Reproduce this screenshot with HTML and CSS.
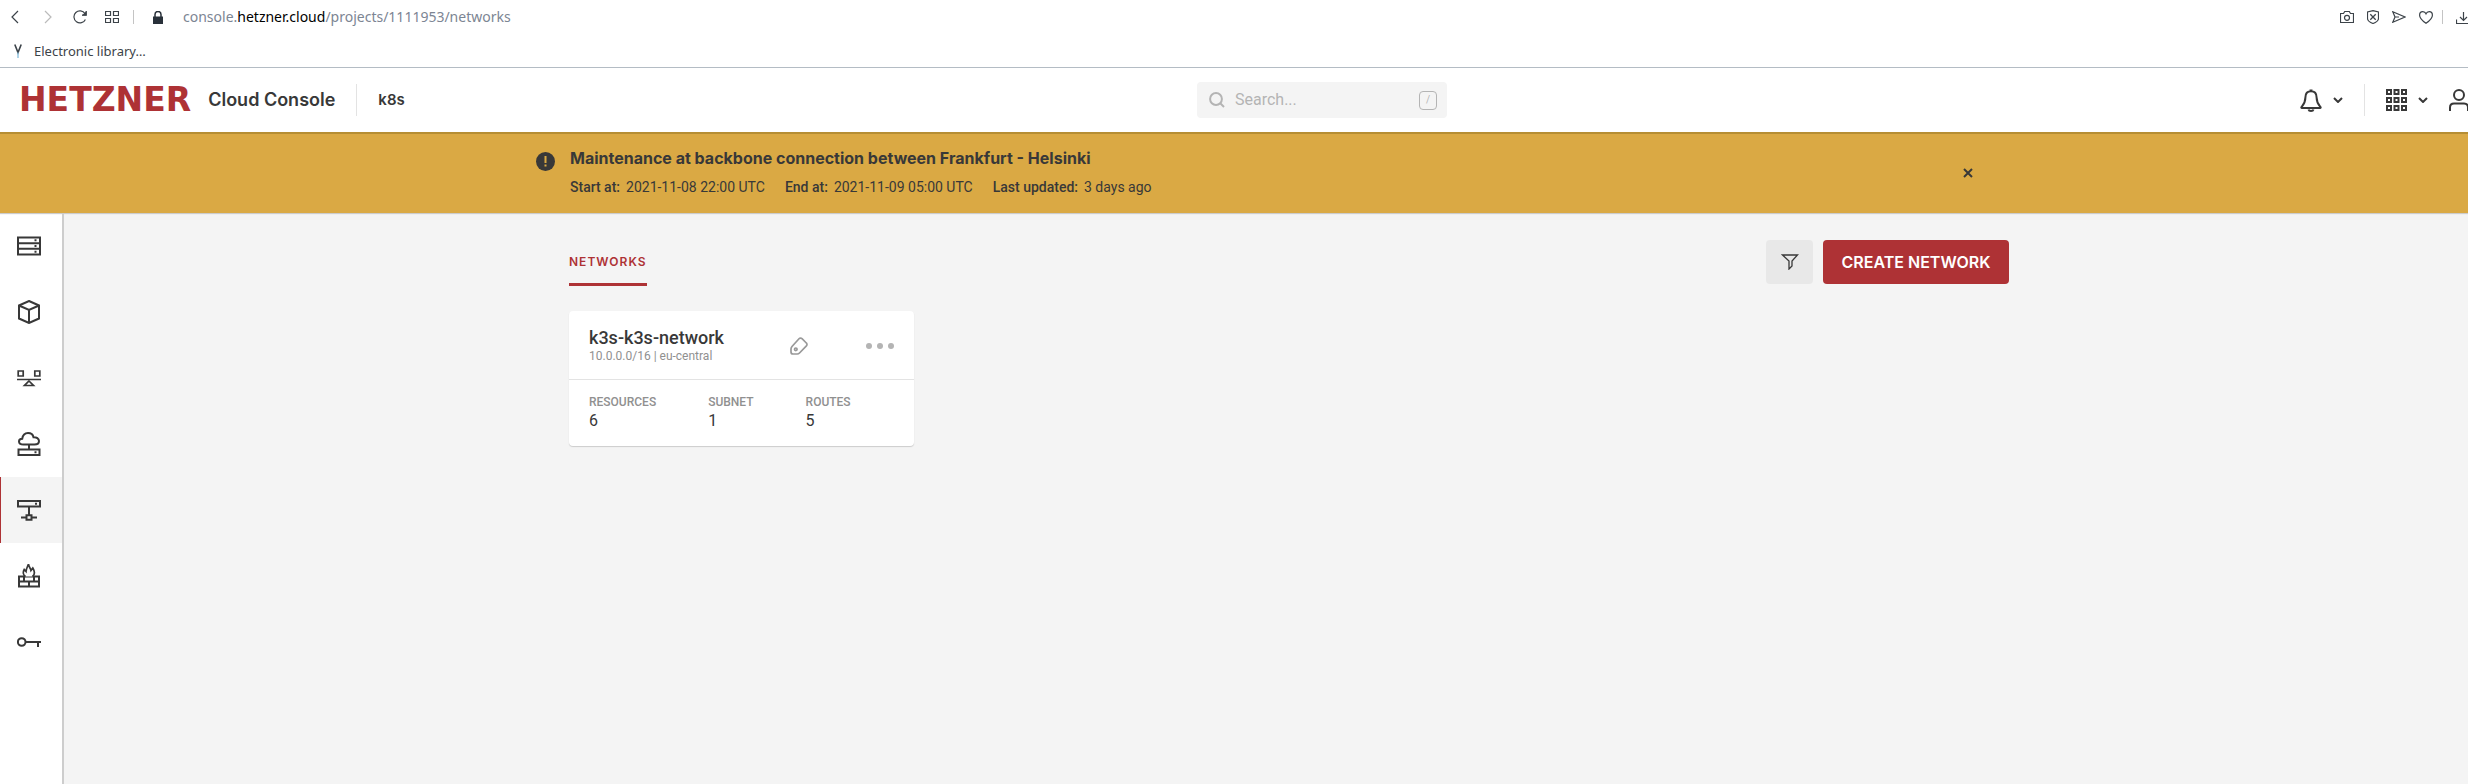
FILE: index.html
```html
<!DOCTYPE html>
<html lang="en">
<head>
<meta charset="utf-8">
<title>Networks - Hetzner Cloud Console</title>
<link rel="stylesheet" href="styles.css">
</head>
<body>
<div class="shell">
  <div class="browser">
    <div class="toolbar">
      <button class="tool" aria-label="Back"><svg width="8" height="14" viewBox="0 0 8 14"><path d="M7 1 1 7l6 6"/></svg></button>
      <button class="tool tool-off" aria-label="Forward"><svg width="8" height="14" viewBox="0 0 8 14"><path d="m1 1 6 6-6 6"/></svg></button>
      <button class="tool" aria-label="Reload"><svg width="14" height="14" viewBox="0 0 14 14"><path d="M12.4 9.4A6 6 0 1 1 12 3.6M13.2 1v4.2H9"/><path class="fill" d="M13.5 1v4.5H9z"/></svg></button>
      <button class="tool" aria-label="Speed dial"><svg width="14" height="12" viewBox="0 0 14 12"><path d="M.5.5h5v4h-5zM8.500 .5h5v4h-5zM.5 7.500h5v4h-5zM8.500 7.500h5v4h-5z"/></svg></button>
      <span class="bar"></span>
      <svg class="lock" width="10" height="13" viewBox="0 0 10 13"><path class="fill" d="M0 5.500h10V13H0z"/><path d="M2 6V3.500a3 3 0 0 1 6 0V6" stroke-width="1.500"/></svg>
      <p class="url">console.<b>hetzner.cloud</b>/projects/1111953/networks</p>
      <div class="extras">
        <svg width="14" height="14" viewBox="0 0 14 14"><path d="M.5 3.500h3l1.200-2h4.600l1.200 2h3v9H.5z"/><circle cx="7" cy="7.800" r="2.500"/></svg>
        <svg width="12" height="14" viewBox="0 0 12 14"><path d="M6 .6 11.500 2v6.500c0 2.500-2.800 4-5.500 5C3.300 12.500.5 11 .5 8.500V2z"/><path d="m3.300 4.300 5.400 5.400m0-5.400L3.300 9.700" stroke-width="1.300"/></svg>
        <svg width="14" height="12" viewBox="0 0 14 12"><path d="M.8.8 13 6 .8 11.200 3 6zM3 6h4"/></svg>
        <svg width="14" height="13" viewBox="0 0 14 13"><path d="M7 12.300C3 9.500.6 7.200.6 4.200.6 2 2 .6 3.800.6 5.200.6 6.400 1.400 7 2.800 7.600 1.400 8.800.6 10.200.6c1.800 0 3.200 1.400 3.200 3.600 0 3-2.400 5.300-6.400 8.100z"/></svg>
        <span class="bar"></span>
        <svg width="15" height="13" viewBox="0 0 15 13"><circle class="dot" cx="15" cy="1" r="3"/><path d="M.5 8.500v4h14v-4M7.500 1v8M4 6l3.500 3.500L11 6"/></svg>
      </div>
    </div>
    <div class="bookmarks">
      <a href="#" class="bookmark"><svg width="8" height="14" viewBox="0 0 8 14"><path d="M.8.5 4 8.500 7.200.5" stroke-width="1.600"/><path class="stem" d="M4 8.500V14"/></svg>Electronic library…</a>
    </div>
  </div>

  <header class="header">
    <div class="brand">
      <a class="logo" href="#">HETZNER</a>
      <a class="product" href="#">Cloud Console</a>
      <span class="rule"></span>
      <a class="project" href="#">k8s</a>
    </div>
    <label class="search">
      <svg width="16" height="16" viewBox="0 0 16 16"><circle cx="7" cy="7" r="5.900"/><path d="m11 11 4 4"/></svg>
      <input type="text" placeholder="Search..." aria-label="Search">
      <kbd>/</kbd>
    </label>
    <nav class="account">
      <button class="menu" aria-label="Notifications"><svg width="22" height="23" viewBox="0 0 22 23"><path d="M11 2.200C7 2.200 5.400 5 5.400 8.500c0 5.200-1.800 7-3.900 9.500-.4.600-.2 1 .4 1h18.200c.6 0 .8-.4.4-1-2.100-2.500-3.900-4.300-3.900-9.500C16.600 5 15 2.200 11 2.200zM9.500 1.500h3M8.500 20.500c.5 2 4.500 2 5 0"/></svg><svg width="10" height="6" viewBox="0 0 10 6"><path d="m1 1 4 4 4-4"/></svg></button>
      <span class="rule"></span>
      <button class="menu" aria-label="Products"><svg width="21" height="22" viewBox="0 0 21 22"><path d="M1 1h4v4H1zM8.500 1h4v4h-4zM16 1h4v4h-4zM1 9h4v4H1zM8.500 9h4v4h-4zM16 9h4v4h-4zM1 17h4v4H1zM8.500 17h4v4h-4zM16 17h4v4h-4z"/></svg><svg width="10" height="6" viewBox="0 0 10 6"><path d="m1 1 4 4 4-4"/></svg></button>
      <button class="menu" aria-label="Account"><svg width="22" height="22" viewBox="0 0 22 22"><circle cx="10" cy="6" r="5"/><path d="M1 22v-3.500c0-2.500 1.500-4 4-4h10c2.500 0 4 1.500 4 4V22"/></svg></button>
    </nav>
  </header>

  <section class="banner">
    <div class="notice">
      <svg width="19" height="19" viewBox="0 0 19 19"><circle cx="9.500" cy="9.500" r="9.500"/><path d="M9.500 4v7M9.500 12.500v2"/></svg>
      <div class="notice-text">
        <h2>Maintenance at backbone connection between Frankfurt - Helsinki</h2>
        <dl>
          <div><dt>Start at:</dt><dd>2021-11-08 22:00 UTC</dd></div>
          <div><dt>End at:</dt><dd>2021-11-09 05:00 UTC</dd></div>
          <div><dt>Last updated:</dt><dd>3 days ago</dd></div>
        </dl>
      </div>
      <button class="close" aria-label="Close"><svg width="10" height="10" viewBox="0 0 10 10"><path d="m1 1 8 8m0-8L1 9"/></svg></button>
    </div>
  </section>

  <div class="body">
    <nav class="side">
      <a href="#" aria-label="Servers"><svg width="24" height="24" viewBox="0 0 24 24"><path d="M1 3.500h22v17H1zM1 9.200h22M1 14.800h22M17.500 6.300h2M17.500 12h2M17.500 17.700h2"/></svg></a>
      <a href="#" aria-label="Volumes"><svg width="24" height="24" viewBox="0 0 24 24"><path d="m12 1 10 4.500v13L12 23 2 18.500v-13zM2 5.500 12 10l10-4.500M12 10v13"/></svg></a>
      <a href="#" aria-label="Load balancers"><svg width="24" height="24" viewBox="0 0 24 24"><path d="M1.200 5h5v5h-5zM17.800 5h5v5h-5zM0 13.500h24" stroke-width="1.700"/><path d="m12 15 4.500 4.500h-9z" stroke-width="1.700"/></svg></a>
      <a href="#" aria-label="Floating IPs"><svg width="24" height="24" viewBox="0 0 24 24"><path d="M6.500 12.500C4 12.500 2 11.500 2 9.500 2 7.800 3.500 6.800 5.200 6.800 5.800 3 8 1 11 1c2.800 0 5 1.600 5.500 4.200C19.500 5 22 6.500 22 9c0 2.200-2 3.500-4.500 3.500zM12 13v4M1.500 17.500h21V23h-21zM17.500 20.300h2"/></svg></a>
      <a href="#" class="on" aria-label="Networks"><svg width="24" height="24" viewBox="0 0 24 24"><path d="M1 3h22v5.500H1zM18 5.800h2M12 9v8M4 19.500h5M15 19.500h5M9.500 17.200h5v4.600h-5z"/></svg></a>
      <a href="#" aria-label="Firewalls"><svg width="24" height="24" viewBox="0 0 24 24"><path d="M2 12.500h20v10H2zM2 17.500h20M12 17.500v5M7 12.500v5M17 12.500v5"/><path class="flame" d="M8.500 12.500C6 11 5.800 8 7.200 5.500L9 7.500C9.200 4.500 10.500 3 11.500 0c.2 3 2 4 2.500 6.500l1.800-2.500c1.800 3 2.200 6.500-.3 8.500"/></svg></a>
      <a href="#" aria-label="Security"><svg width="24" height="24" viewBox="0 0 24 24"><circle cx="4.700" cy="12" r="3.800"/><path d="M8.500 12H24M21 12v5"/></svg></a>
    </nav>
    <main class="main">
      <div class="content">
        <div class="actions">
          <a class="tab" href="#">NETWORKS</a>
          <div class="buttons">
            <button class="filter" aria-label="Filter"><svg width="18" height="16" viewBox="0 0 18 16"><path d="M1.500 1h15l-5.500 6v5l-3 3V7z"/></svg></button>
            <button class="create">CREATE NETWORK</button>
          </div>
        </div>
        <article class="card">
          <div class="card-head">
            <div class="card-name"><h3>k3s-k3s-network</h3><p>10.0.0.0/16 | eu-central</p></div>
            <button class="label" aria-label="Labels"><svg width="18" height="18" viewBox="0 0 18 18"><path d="M9 1.800c.8-.9 2.200-.9 3-.1L16.300 6c.9.800.9 2 .1 2.800L9.500 16c-.7.700-1.300 1-2.300 1H3c-1.300 0-2-.7-2-2v-3c0-1 .3-1.700 1-2.500z"/><circle cx="5.800" cy="12.300" r="1.300"/></svg></button>
            <button class="more" aria-label="More"><i></i><i></i><i></i></button>
          </div>
          <dl class="facts">
            <div><dt>RESOURCES</dt><dd>6</dd></div>
            <div><dt>SUBNET</dt><dd>1</dd></div>
            <div><dt>ROUTES</dt><dd>5</dd></div>
          </dl>
        </article>
      </div>
    </main>
  </div>
</div>
</body>
</html>
```
FILE: styles.css
```css
* { box-sizing: border-box; }
html { height: 100%; }
body { margin: 0; min-height: 100%; overflow-x: hidden; background: #f4f4f4; color: #383838; font-family: Roboto, "Liberation Sans", sans-serif; }
h2, h3, p, dl, dd { margin: 0; }
a { color: inherit; text-decoration: none; }
button { margin: 0; padding: 0; border: 0; background: none; color: inherit; font: inherit; cursor: pointer; }
svg { display: block; flex: none; fill: none; stroke: currentColor; stroke-width: 2; }

/* The shell runs 46px past the right edge of the window */
.shell { display: flex; flex-direction: column; width: calc(100% + 46px); min-height: 100vh; }

.browser { background: #fff; border-bottom: 1px solid #b4bcc4; color: #3c4349; font-family: "Noto Sans", sans-serif; }
.browser svg { stroke-width: 1.2; }
.browser .fill { fill: currentColor; stroke: none; }
.toolbar { display: flex; align-items: center; height: 34px; padding-left: 11px; }
.tool { margin-right: 25px; }
.tool + .tool { margin-right: 21px; }
.tool + .tool + .tool { margin-right: 18px; }
.tool-off { color: #bbb; }
.bar { width: 1px; height: 14px; background: #c4c4c4; }
.toolbar .tool + .bar { margin-right: 19px; margin-left: -4px; }
.lock { color: #29313a; }
.url { margin-left: 20px; color: #7c8593; font-size: 14px; line-height: 20px; }
.url b { color: #000; font-weight: 400; }
.extras { display: flex; align-items: center; gap: 13px; margin-left: auto; padding-right: 43px; }
.extras .bar { margin-left: -4px; }
.extras .dot { fill: #4d7df0; stroke: none; }
.bookmarks { display: flex; align-items: center; height: 33px; padding-left: 14px; }
.bookmark { display: flex; align-items: center; gap: 12px; font-size: 13px; line-height: 18px; }
.bookmark .stem { stroke: #79b6d8; }

.header { display: grid; grid-template-columns: 1197fr 250px 1067fr; align-items: center; height: 64px; background: #fff; }
.brand { display: flex; align-items: center; padding-left: 19px; font-family: Inter, sans-serif; font-weight: 600; }
.logo { color: #ae3235; font: 700 33px/32px "DejaVu Sans", sans-serif; }
.product { margin-left: 17px; font-size: 18px; line-height: 24px; }
.project { font-size: 15px; line-height: 24px; }
.rule { width: 1px; height: 32px; margin: 0 21px; background: #e3e3e3; }
.search { display: flex; align-items: center; height: 36px; padding: 0 10px 0 12px; border-radius: 4px; background: #f4f4f4; color: #b4b4b4; }
.search input { flex: 1; min-width: 0; margin-left: 10px; padding: 0; border: 0; outline: 0; background: none; font: 16px/24px Roboto, sans-serif; }
.search input::placeholder { color: #b4b4b4; opacity: 1; }
.search kbd { width: 18px; height: 19px; border: 1px solid #b4b4b4; border-radius: 4px; font: 10px/16px Roboto, sans-serif; text-align: center; }
.account { display: flex; align-items: center; justify-content: flex-end; padding-right: 43px; }
.menu { display: flex; align-items: center; gap: 11px; }
.menu + .menu { margin-left: 21px; }

.banner { height: 81px; padding-left: 66px; border-top: 2px solid #b68e34; background: #daa944; box-shadow: 0 1px 1px #ccc; z-index: 1; }
.notice { display: flex; width: 1440px; max-width: 90%; margin: 0 auto; padding-top: 14px; }
.notice > svg { margin: 4px 15px 0 -34px; fill: #383838; stroke: none; }
.notice > svg path { stroke: #daa944; }
.notice h2 { font: 700 16px/20px Inter, sans-serif; }
.notice dl { display: flex; gap: 20px; margin-top: 9px; font-size: 14px; line-height: 20px; }
.notice dl div { display: flex; gap: 6px; }
.notice dt { font-weight: 500; }
.close { align-self: center; margin: 0 37px 0 auto; }

.body { display: flex; flex: 1; }
.side { display: flex; flex-direction: column; width: 64px; border-right: 2px solid #cdcdcd; background: #fff; }
.side a { display: flex; align-items: center; height: 66px; padding-left: 17px; }
.side .on { padding-left: 16px; border-left: 1px solid #ae3235; background: #f4f4f4; }
.side .flame { fill: #fff; stroke-width: 1.7; }
.main { flex: 1; padding-top: 27px; }
.content { width: 1440px; max-width: 90%; margin: 0 auto; }
.actions { display: flex; justify-content: space-between; align-items: flex-start; }
.tab { padding: 12px 0 11px; border-bottom: 3px solid #ae3235; color: #ae3235; font: 600 12px/20px Inter, sans-serif; letter-spacing: 1px; }
.buttons { display: flex; gap: 10px; }
.filter { display: grid; place-items: center; width: 47px; height: 44px; border-radius: 4px; background: #e8e8e8; }
.filter svg { stroke-width: 1.3; }
.create { min-width: 186px; height: 44px; padding: 0 16px; border-radius: 4px; background: #ae3235; color: #fff; font: 600 16px/20px Inter, sans-serif; }

.card { width: 345px; margin-top: 25px; border-radius: 4px; background: #fff; box-shadow: 0 1px 1px #ccc; }
.card-head { display: flex; align-items: center; height: 69px; padding: 2px 20px 0; border-bottom: 1px solid #e3e3e3; }
.card-name { flex: 1; }
.card-name h3 { font-size: 18px; font-weight: 500; line-height: 20px; }
.card-name p { color: #909090; font-size: 12px; line-height: 16px; }
.label { margin-right: 58px; color: #999; }
.label svg { stroke-width: 1.7; }
.more { display: flex; gap: 5px; }
.more i { width: 6px; height: 6px; border-radius: 50%; background: #b4b4b4; }
.facts { display: flex; gap: 52px; padding: 13px 20px 15px; }
.facts dt { color: #909090; font-size: 12px; font-weight: 500; line-height: 18px; }
.facts dd { font-size: 16px; line-height: 20px; }
```
